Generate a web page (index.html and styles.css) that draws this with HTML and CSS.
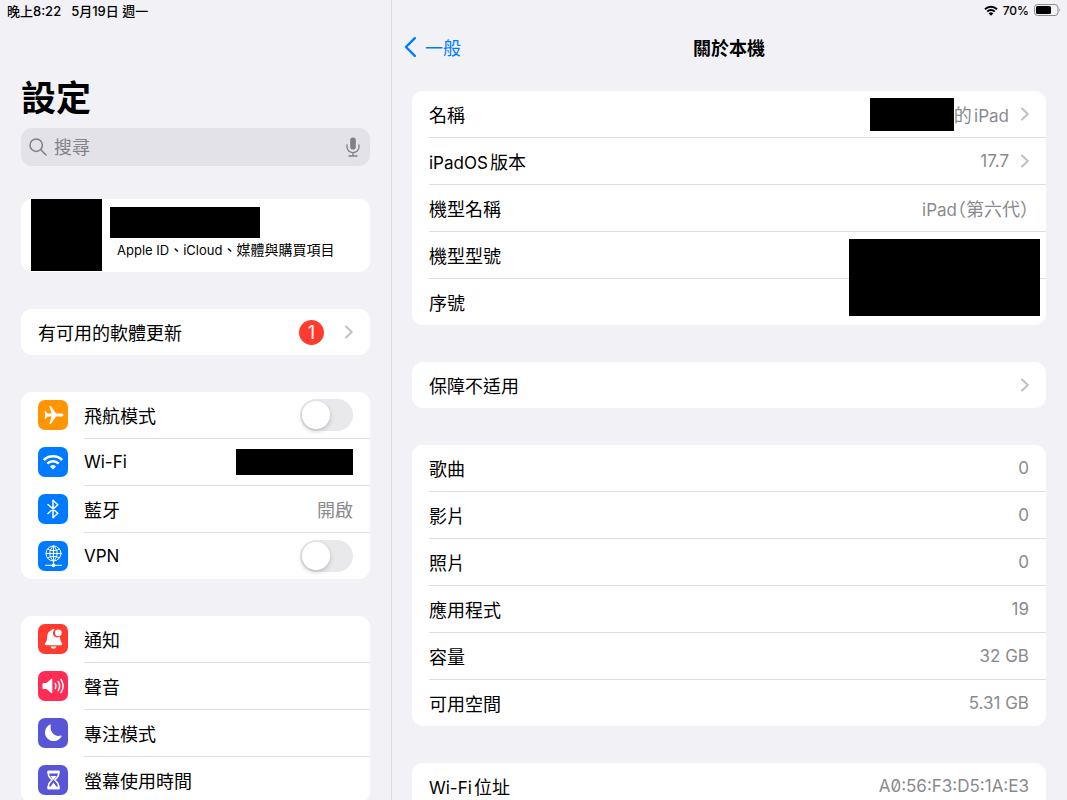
FILE: index.html
```html
<!DOCTYPE html>
<html lang="zh-Hant">
<head>
  <meta charset="UTF-8" />
  <meta name="viewport" content="width=device-width, initial-scale=1.0"/>
  <title>關於本機</title>
  <link rel="stylesheet" href="styles.css">
</head>
<body>
  <div class="app">

    <!-- Sidebar -->
    <aside class="sidebar">
      <div class="status">
        <span>晚上8:22</span>
        <span>5月19日 週一</span>
      </div>

      <h1>設定</h1>

      <div class="search">
        <svg class="search-icon" viewBox="0 0 18 18" aria-hidden="true">
          <circle cx="7.2" cy="7.2" r="6.2"/>
          <path d="M11.8 11.8L17 17"/>
        </svg>
        <input type="search" placeholder="搜尋" aria-label="搜尋">
        <button class="mic" aria-label="聽寫">
          <svg viewBox="0 0 14 20" aria-hidden="true">
            <rect class="fill" x="4.2" y="0.5" width="5.6" height="12" rx="2.8"/>
            <path d="M1 8v2a6 5.600 0 0 0 12 0V8M7 15.600V19M3 19h8"/>
          </svg>
        </button>
      </div>

      <a class="card account" href="#">
        <span class="avatar"></span>
        <span class="account-text">
          <span class="account-name"></span>
          <span class="account-sub"><span lang="en">Apple ID</span>、<span lang="en">iCloud</span>、媒體與購買項目</span>
        </span>
      </a>

      <div class="card">
        <a class="row" href="#">
          <span class="row-body">
            <span class="label">有可用的軟體更新</span>
            <span class="badge">1</span>
            <svg class="chevron" viewBox="0 0 8 14" aria-hidden="true"><path d="M1 1.500L6.800 7L1 12.500"/></svg>
          </span>
        </a>
      </div>

      <div class="card">
        <div class="row">
          <svg class="icon orange" viewBox="0 0 30 30" aria-hidden="true">
            <path d="M25.500 15c0-1-1.300-1.500-2.800-1.500H18L13.200 6.600c-.3-.4-.6-.6-1-.6h-.9l2.300 7.500H9.500L7.800 11.300H6.600L7.200 15l-.6 3.700h1.200l1.700-2.200h4.100L11.300 24h.9c.4 0 .7-.2 1-.6L18 16.500h4.700c1.500 0 2.800-.5 2.800-1.500z"/>
          </svg>
          <div class="row-body">
            <label class="label" for="airplane">飛航模式</label>
            <input class="toggle" type="checkbox" id="airplane">
          </div>
        </div>
        <a class="row" href="#">
          <svg class="icon blue" viewBox="0 0 30 30" aria-hidden="true">
            <path class="line thick" d="M5.800 13a13 13 0 0 1 18.400 0M9.300 16.600a8.100 8.100 0 0 1 11.400 0"/>
            <path d="M15 22.500l-3-3.100a4.300 4.300 0 0 1 6 0z"/>
          </svg>
          <span class="row-body">
            <span class="label" lang="en">Wi-Fi</span>
            <span class="redacted network"></span>
          </span>
        </a>
        <a class="row" href="#">
          <svg class="icon blue" viewBox="0 0 30 30" aria-hidden="true">
            <path class="line" d="M10 10.500l9.800 8.700-4.800 4.500V6.300l4.800 4.500L10 19.500"/>
          </svg>
          <span class="row-body">
            <span class="label">藍牙</span>
            <span class="value">開啟</span>
          </span>
        </a>
        <div class="row">
          <svg class="icon blue" viewBox="0 0 30 30" aria-hidden="true">
            <circle class="line thin" cx="15.500" cy="12.500" r="7.500"/>
            <path class="line thin" d="M15.500 5v15M8 12.500h15M9.800 8.200c3.300 2 8.100 2 11.400 0M9.800 16.800c3.300-2 8.100-2 11.400 0M15.500 5c-5 4.400-5 10.600 0 15M15.500 5c5 4.400 5 10.600 0 15M15.500 20v4M7.500 24.300h16"/>
            <circle cx="15.500" cy="24.300" r="1.900"/>
          </svg>
          <div class="row-body">
            <label class="label" for="vpn" lang="en">VPN</label>
            <input class="toggle" type="checkbox" id="vpn">
          </div>
        </div>
      </div>

      <div class="card">
        <a class="row" href="#">
          <svg class="icon red" viewBox="0 0 30 30" aria-hidden="true">
            <path d="M16.700 5.500a4.300 4.300 0 0 0 5.300 7.100c.2 3.800.6 4.800 2 6.600.6.800.3 2-.8 2H8c-1.200 0-1.600-1.200-.9-2 1.800-2 1.900-3.600 2.100-6.800.2-3.200 1.700-5.200 4-6 .7-1.200 2.200-1.700 3.500-.9zM12.600 22.500h5.800a3 3 0 0 1-5.800 0z"/>
            <circle cx="20.300" cy="8.900" r="3.300"/>
          </svg>
          <span class="row-body"><span class="label">通知</span></span>
        </a>
        <a class="row" href="#">
          <svg class="icon pink" viewBox="0 0 30 30" aria-hidden="true">
            <path d="M5.800 12h2.700l4.600-3.900c.6-.5 1.200-.2 1.200.5v12.800c0 .7-.6 1-1.200.5L8.500 18H5.800c-.9 0-1.300-.4-1.300-1.300v-3.400c0-.9.400-1.300 1.300-1.300z"/>
            <path class="line" d="M17.300 12.500q1.500 2.500 0 5M20.200 10.500q2.800 4.500 0 9M23 8.500q4.200 6.500 0 13"/>
          </svg>
          <span class="row-body"><span class="label">聲音</span></span>
        </a>
        <a class="row" href="#">
          <svg class="icon purple" viewBox="0 0 30 30" aria-hidden="true">
            <path d="M12.800 7.200c-1.500 5.900 3.600 12.100 10 10.400.5-.1.900.2.700.7A8.700 8.700 0 1 1 12.100 6.500c.5-.2.900.1.700.7z"/>
          </svg>
          <span class="row-body"><span class="label">專注模式</span></span>
        </a>
        <a class="row" href="#">
          <svg class="icon purple" viewBox="0 0 30 30" aria-hidden="true">
            <path class="line" d="M10.200 6.500h10.600c0 4.500-1 5.800-4 8.500 3 2.700 4 4 4 8.500H10.200c0-4.500 1-5.800 4-8.500-3-2.700-4-4-4-8.500z"/>
            <path d="M9.500 5.800h12v2.600h-12zM9.500 21.600h12v2.600h-12zM12.300 11h6.400l-3.200 4zM15.500 17.500l3.500 5h-7z"/>
          </svg>
          <span class="row-body"><span class="label">螢幕使用時間</span></span>
        </a>
      </div>
    </aside>

    <!-- Detail pane -->
    <main class="detail">
      <div class="status status-right">
        <svg class="status-wifi" viewBox="0 0 14 11" aria-hidden="true">
          <path d="M1 4.200a8.500 8.500 0 0 1 12 0M3.300 6.600a5.200 5.200 0 0 1 7.400 0"/>
          <path class="fill" d="M7 10.800L4.700 8.400a3.300 3.300 0 0 1 4.600 0z"/>
        </svg>
        <span>70%</span>
        <svg class="battery" viewBox="0 0 27 12" aria-hidden="true">
          <rect class="shell" x="0.500" y="0.500" width="23.500" height="11" rx="3"/>
          <rect x="2" y="2" width="15" height="8" rx="1.500"/>
          <path class="tip" d="M25.200 4q1.600 2 0 4z"/>
        </svg>
      </div>

      <div class="navbar">
        <a class="back" href="#">
          <svg viewBox="0 0 12 20" aria-hidden="true"><path d="M10.800 1.200L2 10l8.800 8.800"/></svg>
          一般
        </a>
        <h2>關於本機</h2>
      </div>

      <div class="card">
        <a class="row" href="#">
          <span class="row-body">
            <span class="label">名稱</span>
            <span class="redacted owner"></span>
            <span class="value">的<span lang="en">iPad</span></span>
            <svg class="chevron" viewBox="0 0 8 14" aria-hidden="true"><path d="M1 1.500L6.800 7L1 12.500"/></svg>
          </span>
        </a>
        <a class="row" href="#">
          <span class="row-body">
            <span class="label"><span lang="en">iPadOS</span>版本</span>
            <span class="value" lang="en">17.7</span>
            <svg class="chevron" viewBox="0 0 8 14" aria-hidden="true"><path d="M1 1.500L6.800 7L1 12.500"/></svg>
          </span>
        </a>
        <div class="row">
          <div class="row-body">
            <span class="label">機型名稱</span>
            <span class="value"><span lang="en">iPad</span><span class="half">（第六代）</span></span>
          </div>
        </div>
        <div class="row">
          <div class="row-body"><span class="label">機型型號</span></div>
        </div>
        <div class="row">
          <div class="row-body"><span class="label">序號</span></div>
        </div>
        <div class="redacted serial"></div>
      </div>

      <div class="card">
        <a class="row" href="#">
          <span class="row-body">
            <span class="label">保障不适用</span>
            <svg class="chevron" viewBox="0 0 8 14" aria-hidden="true"><path d="M1 1.500L6.800 7L1 12.500"/></svg>
          </span>
        </a>
      </div>

      <div class="card">
        <div class="row">
          <div class="row-body"><span class="label">歌曲</span><span class="value" lang="en">0</span></div>
        </div>
        <div class="row">
          <div class="row-body"><span class="label">影片</span><span class="value" lang="en">0</span></div>
        </div>
        <div class="row">
          <div class="row-body"><span class="label">照片</span><span class="value" lang="en">0</span></div>
        </div>
        <div class="row">
          <div class="row-body"><span class="label">應用程式</span><span class="value" lang="en">19</span></div>
        </div>
        <div class="row">
          <div class="row-body"><span class="label">容量</span><span class="value" lang="en">32 GB</span></div>
        </div>
        <div class="row">
          <div class="row-body"><span class="label">可用空間</span><span class="value" lang="en">5.31 GB</span></div>
        </div>
      </div>

      <div class="card">
        <div class="row">
          <div class="row-body">
            <span class="label"><span lang="en">Wi-Fi</span>位址</span>
            <span class="value address" lang="en">A0:56:F3:D5:1A:E3</span>
          </div>
        </div>
      </div>
    </main>

  </div>
</body>
</html>
```

FILE: styles.css
```css
* {
  box-sizing: border-box;
}

body {
  margin: 0;
  font-family: Inter, "Noto Sans CJK TC", sans-serif;
  font-size: 18px;
  text-autospace: normal;
  background-color: #f2f1f6;
  color: #000;
}

/* Latin text is set a little smaller than the Chinese */
:lang(en) {
  font-size: 17px;
}

a {
  color: inherit;
  text-decoration: none;
}

h1, h2 {
  margin: 0;
}

.app {
  display: flex;
  height: 100vh;
  overflow: hidden;
}

.sidebar {
  width: 392px;
  flex: none;
  padding: 0 21px;
  border-right: 1px solid #dcdbe0;
}

.detail {
  flex: 1;
  padding: 0 21px 0 20px;
}

/* status bar */
.status {
  display: flex;
  align-items: center;
  gap: 10px;
  height: 20px;
  margin-left: -14px;
  font-size: 13px;
  font-weight: 500;
  text-autospace: no-autospace;
}

.status-right {
  justify-content: flex-end;
  gap: 5px;
  margin: 0 -15px 0 0;
  font-size: 12px;
}

.status-wifi {
  width: 14px;
  height: 11px;
  fill: none;
  stroke: #000;
  stroke-width: 2;
}

.status-wifi .fill {
  fill: #000;
  stroke: none;
}

.battery {
  width: 27px;
  height: 12px;
}

.battery .shell {
  fill: none;
  stroke: #8b8b8f;
}

.battery .tip {
  fill: #8b8b8f;
}

/* sidebar header */
h1 {
  margin: 57px 0 9px;
  font-size: 35px;
  line-height: 42px;
}

.search {
  display: flex;
  align-items: center;
  height: 38px;
  margin-bottom: 33px;
  padding: 0 8px;
  border-radius: 11px;
  background-color: #e3e2e8;
}

.search-icon {
  width: 18px;
  height: 18px;
  fill: none;
  stroke: #7f7f84;
  stroke-width: 1.5;
  stroke-linecap: round;
}

.search input {
  flex: 1;
  min-width: 0;
  padding: 0 7px;
  border: none;
  outline: none;
  background: none;
  font: inherit;
}

.search input::placeholder {
  color: #838388;
}

.mic {
  padding: 0;
  border: none;
  background: none;
  line-height: 0;
}

.mic svg {
  width: 18px;
  height: 20px;
  fill: none;
  stroke: #7f7f84;
  stroke-width: 1.3;
  stroke-linecap: round;
}

.mic .fill {
  fill: #7f7f84;
  stroke: none;
}

/* cards and rows */
.card {
  position: relative;
  margin-bottom: 37px;
  border-radius: 11px;
  background-color: #fff;
}

.row {
  display: flex;
  align-items: center;
  padding-left: 17px;
}

.row-body {
  display: flex;
  flex: 1;
  align-items: center;
  height: 46px;
  padding-right: 17px;
}

.row + .row .row-body {
  height: 47px;
  border-top: 1px solid #dededf;
}

.label {
  flex: 1;
}

.value {
  color: #8a8a8e;
}

.half {
  font-feature-settings: "halt";
}

.address {
  font-feature-settings: "zero";
}

.chevron {
  width: 8px;
  height: 14px;
  margin-left: 12px;
  fill: none;
  stroke: #c1c1c4;
  stroke-width: 2;
  stroke-linecap: round;
  stroke-linejoin: round;
}

.badge {
  width: 25px;
  margin-right: 9px;
  border-radius: 50%;
  background-color: #ff3b30;
  color: #fff;
  line-height: 25px;
  text-align: center;
}

.icon {
  width: 30px;
  height: 30px;
  margin-right: 16px;
  border-radius: 7px;
  fill: #fff;
}

.icon .line {
  fill: none;
  stroke: #fff;
  stroke-width: 1.5;
  stroke-linecap: round;
  stroke-linejoin: round;
}

.icon .thick {
  stroke-width: 2.6;
  stroke-linecap: butt;
}

.icon .thin {
  stroke-width: 1;
}

.orange { background-color: #ff9500; }
.blue { background-color: #007aff; }
.red { background-color: #ff3b30; }
.pink { background-color: #ff2d55; }
.purple { background-color: #5856d6; }

.toggle {
  appearance: none;
  width: 53px;
  height: 32px;
  margin: 0;
  padding: 2px;
  border-radius: 16px;
  background-color: #e9e9eb;
}

.toggle::before {
  content: "";
  display: block;
  width: 28px;
  height: 28px;
  border-radius: 50%;
  background-color: #fff;
  box-shadow: 0 2px 5px rgba(0, 0, 0, 0.2);
}

.toggle:checked {
  background-color: #34c759;
}

.toggle:checked::before {
  margin-left: auto;
}

/* account card */
.account {
  display: flex;
  gap: 8px;
  height: 73px;
  padding-left: 10px;
}

.avatar {
  width: 71px;
  height: 72px;
  background-color: #000;
}

.account-text {
  display: flex;
  flex-direction: column;
  padding-top: 8px;
}

.account-name {
  width: 150px;
  height: 31px;
  background-color: #000;
}

.account-sub {
  padding-left: 7px;
  font-size: 14px;
  line-height: 24px;
}

.account-sub :lang(en) {
  font-size: 13px;
}

/* hidden values */
.redacted {
  background-color: #000;
}

.network {
  width: 117px;
  height: 26px;
}

.owner {
  width: 84px;
  height: 33px;
}

.serial {
  position: absolute;
  right: 6px;
  bottom: 9px;
  width: 191px;
  height: 77px;
}

/* detail header */
.navbar {
  display: grid;
  grid-template-columns: 1fr auto 1fr;
  align-items: center;
  height: 54px;
  margin-bottom: 17px;
}

.navbar h2 {
  font-size: 18px;
  font-weight: 600;
}

.back {
  display: flex;
  align-items: center;
  gap: 9px;
  margin-left: -8px;
  color: #007aff;
}

.back svg {
  width: 12px;
  height: 20px;
  fill: none;
  stroke: #007aff;
  stroke-width: 2.4;
  stroke-linecap: round;
  stroke-linejoin: round;
}
```
